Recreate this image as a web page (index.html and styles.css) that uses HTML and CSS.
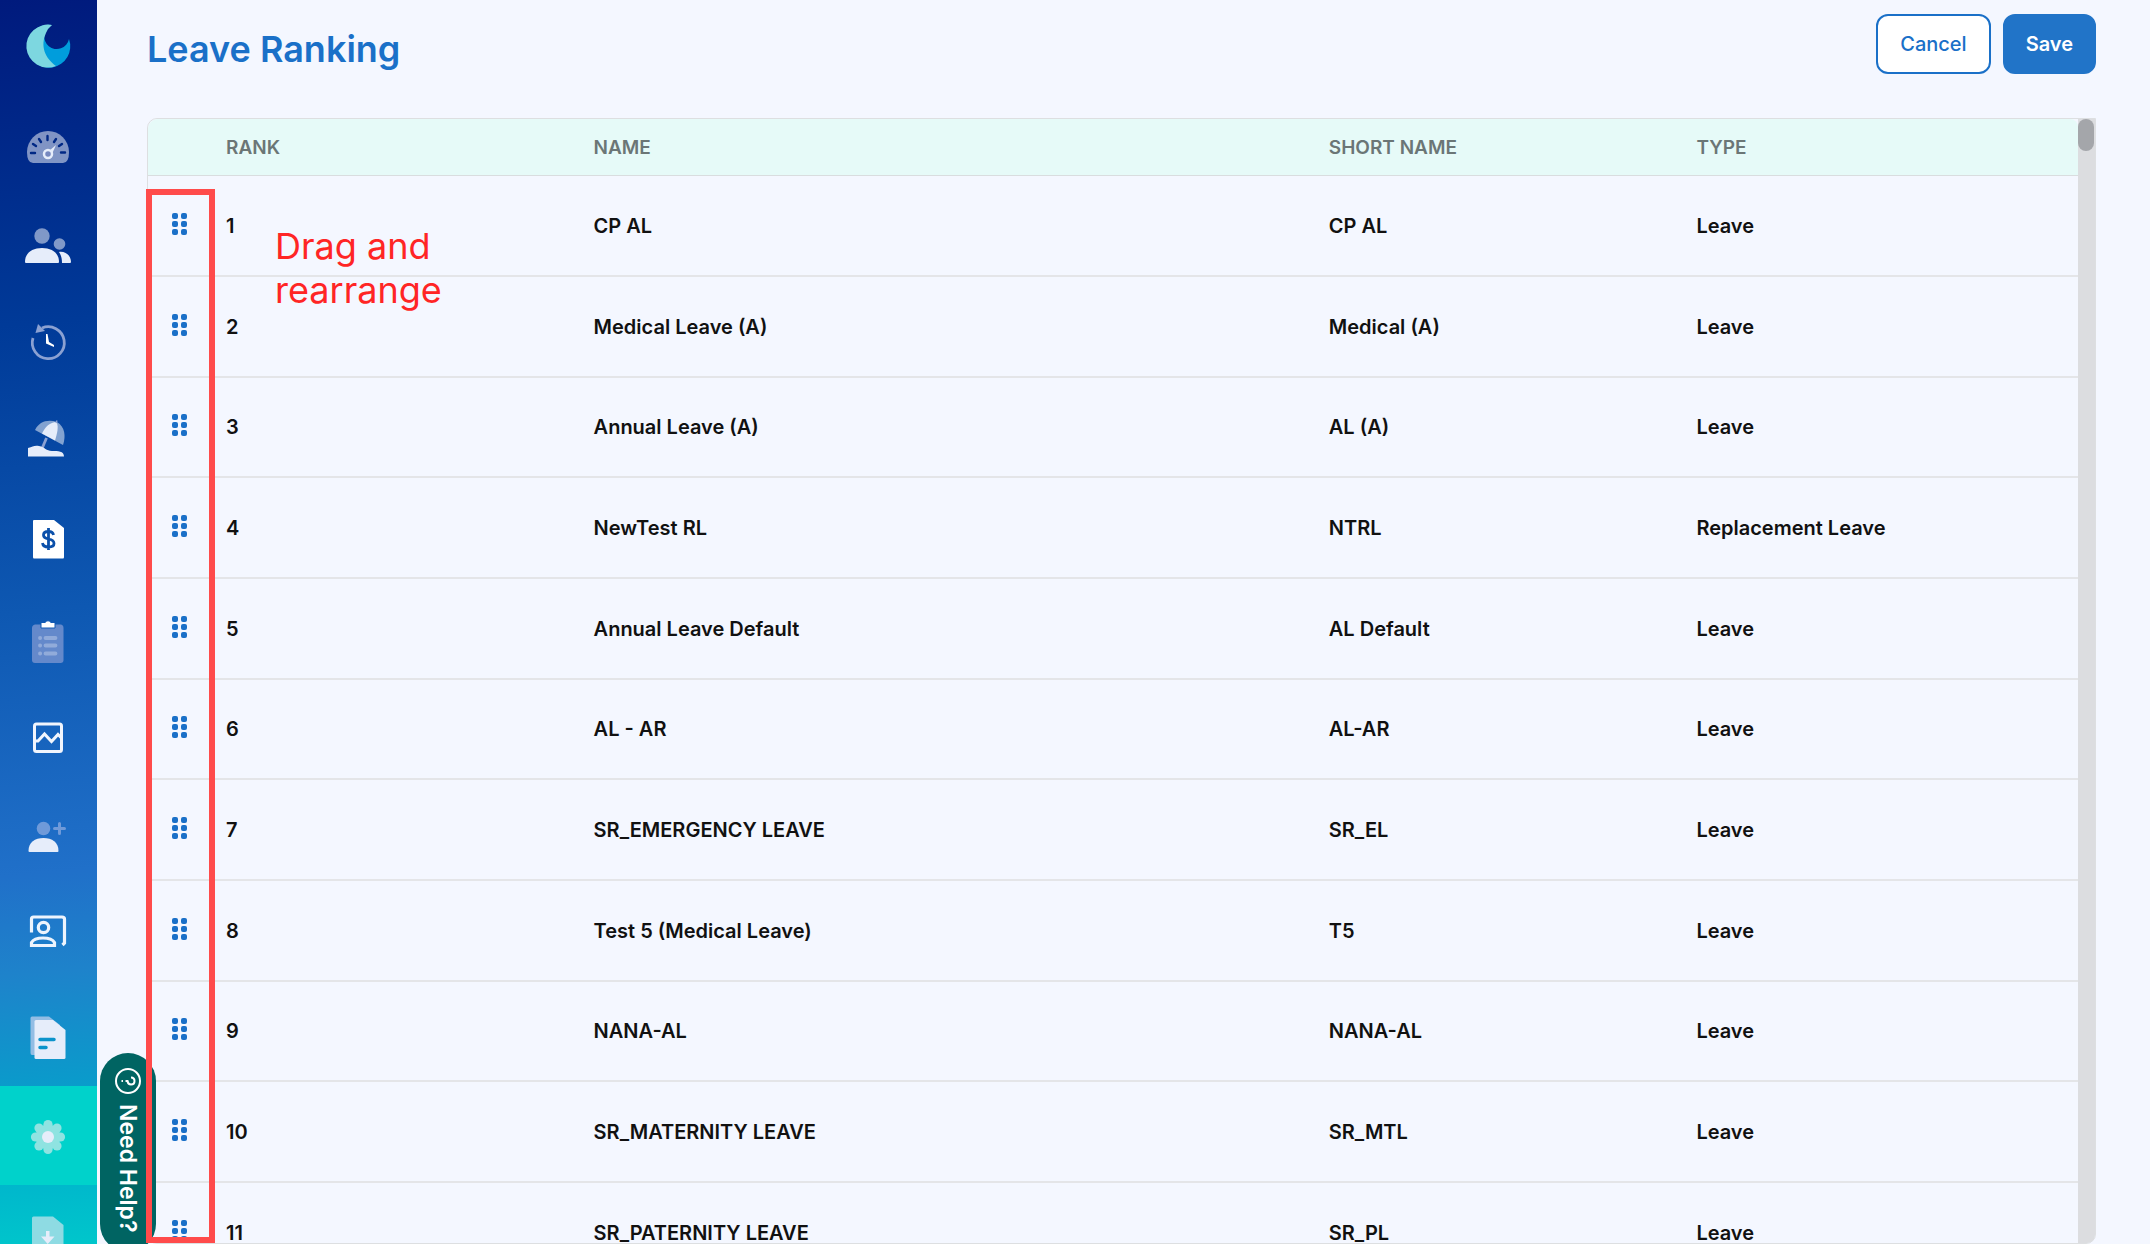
FILE: index.html
```html
<!DOCTYPE html>
<html lang="en">
<head>
  <meta charset="UTF-8">
  <meta name="viewport" content="width=device-width, initial-scale=1.0">
  <title>Leave Ranking</title>
  <link rel="stylesheet" href="styles.css">
</head>
<body>
  <nav class="sidebar" aria-label="Main">
    <a class="nav-item logo" href="#" aria-label="Home">
      <svg viewBox="0 0 97 96">
        <path d="M52 25A21.500 21.500 0 1 0 69 39A12.500 12.500 0 1 1 52 25Z" fill="#009ddc"/>
        <path d="M52 25A21.500 21.500 0 1 0 56 66C45 58 40 46 46 33Q48 28 52 25Z" fill="#7dd7e0"/>
      </svg>
    </a>
    <a class="nav-item" href="#" aria-label="Dashboard">
      <svg viewBox="0 0 97 99">
        <path d="M33 67Q27 67 27 56A21 21 0 0 1 69 56Q69 67 63 67Z" class="soft"/>
        <path d="M31 57H35M61 56.500H65M33 48L36 50M39 43L41 46M47.500 40V44M56 43L54 46M62 48L59 50" stroke="#002885" stroke-width="2.400" stroke-linecap="round"/>
        <path d="M49 55L56 49L52 58Z" class="solid"/>
        <circle cx="48" cy="58" r="4" fill="#7688bf" stroke="#e6edfa" stroke-width="2.500"/>
      </svg>
    </a>
    <a class="nav-item" href="#" aria-label="Employees">
      <svg viewBox="0 0 97 99">
        <circle cx="42" cy="41" r="7.700" class="soft"/>
        <circle cx="59.500" cy="49" r="5.800" class="soft"/>
        <path d="M25 67C25 58 32 53 42 53S59 58 59 67Q59 68 58 68H26Q25 68 25 67Z" class="solid"/>
        <path d="M59 57C66 56 71 61 71 67Q71 68 70 68H62C62 63 61 60 59 57Z" class="solid"/>
      </svg>
    </a>
    <a class="nav-item" href="#" aria-label="Attendance">
      <svg viewBox="0 0 97 99">
        <path d="M33 44A16 16 0 1 0 42 34" fill="none" stroke="#8ba1d2" stroke-width="2.800"/>
        <path d="M38 30L45 37L35.500 39Z" fill="#8ba1d2"/>
        <path d="M46 40H47.500L49 48L54 51V53L46 49.500Z" fill="#fff"/>
      </svg>
    </a>
    <a class="nav-item" href="#" aria-label="Leave">
      <svg viewBox="0 0 97 99">
        <path d="M46.500 45L41 58" stroke="#8ba1d2" stroke-width="2.800"/>
        <path d="M35 37C39 29 47 26 57 29C65 34 66 43 63 52Z" class="soft"/>
        <path d="M42 40.500C45 34 50 29 56.500 29C59 34 57 41 55 47.500Z" class="solid"/>
        <path d="M56 30L57 27.500" stroke="#8ba1d2" stroke-width="1.500"/>
        <path d="M28 55C33 54 34 52 39 53C45 54 46 58 52 58C58 58 64 58 64 63.500H28Z" class="solid"/>
      </svg>
    </a>
    <a class="nav-item" href="#" aria-label="Payroll">
      <svg viewBox="0 0 97 99">
        <path d="M34 28H54L64 36V65Q64 66.500 63 66.500H34Q33 66.500 33 65V29Q33 28 34 28Z" fill="#fff"/>
        <path d="M53.500 43Q53 39.500 48.500 39.500Q43.500 39.500 43.500 43Q43.500 46 48.500 47Q54 48 54 51.500Q54 55 48.500 55Q43 55 42.500 51M48.500 36V58" fill="none" stroke="#0b50aa" stroke-width="2.800"/>
      </svg>
    </a>
    <a class="nav-item" href="#" aria-label="Claims">
      <svg viewBox="0 0 97 99">
        <path d="M35 33.500H61Q63.500 34 63.500 37V69Q63.500 72 60.500 72H35Q32 72 32 69V37Q32 34 35 33.500Z" fill="#6489cb"/>
        <path d="M40 47H40.200M45.500 47H55.500M40 54.500H40.200M45.500 54.500H55.500M40 62.500H40.200M45.500 62.500H55.500" stroke="#91abda" stroke-width="3.800" stroke-linecap="round"/>
        <path d="M41 31.500H45Q48 28 51 31.500H55V37H41Z" fill="#fff" stroke="#125ab5" stroke-width="1"/>
      </svg>
    </a>
    <a class="nav-item" href="#" aria-label="Reports">
      <svg viewBox="0 0 97 99" fill="none" stroke="#f1f5fd" stroke-width="3">
        <rect x="34.500" y="34" width="27" height="27.500" rx="2"/>
        <path d="M36 51L38 51L44.500 44L51.500 51.500L58 44.500L61 47.500"/>
      </svg>
    </a>
    <a class="nav-item" href="#" aria-label="Recruitment">
      <svg viewBox="0 0 97 99">
        <circle cx="43.500" cy="39.500" r="6.800" fill="#6f9ad9"/>
        <path d="M59.500 34.500V44.500M54.500 39.500H64.500" stroke="#6f9ad9" stroke-width="3" stroke-linecap="round"/>
        <path d="M28.500 62C28.500 53 35 49 43.500 49S58.500 53 58.500 62Q58.500 63 57.500 63H29.500Q28.500 63 28.500 62Z" class="solid"/>
      </svg>
    </a>
    <a class="nav-item" href="#" aria-label="Training">
      <svg viewBox="0 0 97 99" fill="none" stroke="#edf4fd" stroke-width="3.200">
        <path d="M31.500 44.500V31Q31.500 29 33.500 29H62Q64.500 29 64.500 31V55L62.500 57"/>
        <circle cx="43.500" cy="39.500" r="5.200"/>
        <path d="M31.500 57.500V54.500C35 48.500 51 48.500 54.500 54.500V57.500Z"/>
      </svg>
    </a>
    <a class="nav-item" href="#" aria-label="Documents">
      <svg viewBox="0 0 97 99">
        <path d="M32 29.500H49L60 38V68H32Q30.500 68 30.500 66V31Q30.500 29.500 32 29.500Z" fill="#93bde4"/>
        <path d="M36 33H53L65.500 43V70.500Q65.500 72 64 72H36Q34.500 72 34.500 70.500V34.500Q34.500 33 36 33Z" class="solid"/>
        <path d="M40 52.500H54M40 60.500H46" stroke="#0b93cb" stroke-width="3.500" stroke-linecap="round"/>
      </svg>
    </a>
    <a class="nav-item active" href="#" aria-label="Settings">
      <svg viewBox="0 0 97 99">
        <g fill="#8fe3e1">
          <circle cx="48" cy="51" r="12.500"/>
          <circle cx="48" cy="38.500" r="4.600"/>
          <circle cx="57" cy="42" r="4.600"/>
          <circle cx="60.500" cy="51" r="4.600"/>
          <circle cx="57" cy="60" r="4.600"/>
          <circle cx="48" cy="63.500" r="4.600"/>
          <circle cx="39" cy="60" r="4.600"/>
          <circle cx="35.500" cy="51" r="4.600"/>
          <circle cx="39" cy="42" r="4.600"/>
        </g>
        <circle cx="48" cy="51" r="6" class="solid"/>
      </svg>
    </a>
    <a class="nav-item" href="#" aria-label="Downloads">
      <svg viewBox="0 0 97 99">
        <path d="M33.500 31.500H53L63.500 40V69H32V33Q32 31.500 33.500 31.500Z" fill="#8edbe3"/>
        <path d="M46 46H49.500V51.500H54.500L47.700 59L41 51.500H46Z" class="solid"/>
      </svg>
    </a>
  </nav>

  <main class="page">
    <header class="page-header">
      <h1>Leave Ranking</h1>
      <div class="actions">
        <button class="btn" type="button">Cancel</button>
        <button class="btn btn-primary" type="button">Save</button>
      </div>
    </header>

    <div class="table-box">
      <table class="ranking">
        <thead>
          <tr><th></th><th>RANK</th><th>NAME</th><th>SHORT NAME</th><th>TYPE</th></tr>
        </thead>
        <tbody id="rows"></tbody>
      </table>
      <div class="track"><div class="thumb"></div></div>
      <div class="highlight"></div>
      <p class="note">Drag and rearrange</p>
    </div>
  </main>

  <button class="help" type="button">
    <svg viewBox="0 0 26 26" fill="none" stroke="#fff" stroke-width="2">
      <circle cx="13" cy="13" r="12"/>
      <path d="M16 9.500Q19.500 9.500 19.500 13T16 16.500Q13 16.500 12.500 13H10.500M8 13H6.500"/>
    </svg>
    <span>Need Help?</span>
  </button>

  <script>
    const leaves = [
      ["CP AL", "CP AL", "Leave"],
      ["Medical Leave (A)", "Medical (A)", "Leave"],
      ["Annual Leave (A)", "AL (A)", "Leave"],
      ["NewTest RL", "NTRL", "Replacement Leave"],
      ["Annual Leave Default", "AL Default", "Leave"],
      ["AL - AR", "AL-AR", "Leave"],
      ["SR_EMERGENCY LEAVE", "SR_EL", "Leave"],
      ["Test 5 (Medical Leave)", "T5", "Leave"],
      ["NANA-AL", "NANA-AL", "Leave"],
      ["SR_MATERNITY LEAVE", "SR_MTL", "Leave"],
      ["SR_PATERNITY LEAVE", "SR_PL", "Leave"]
    ];
    const rows = document.getElementById("rows");

    leaves.forEach(function (leave, index) {
      const row = document.createElement("tr");
      const handle = document.createElement("td");
      handle.innerHTML = '<button class="handle" type="button" aria-label="Move">' +
        "<i></i><i></i><i></i><i></i><i></i><i></i></button>";
      row.appendChild(handle);
      [index + 1].concat(leave).forEach(function (text) {
        const cell = document.createElement("td");
        cell.textContent = text;
        row.appendChild(cell);
      });
      rows.appendChild(row);
    });
  </script>
</body>
</html>
```

FILE: styles.css
```css
* {
  box-sizing: border-box;
}

body {
  margin: 0;
  height: 100vh;
  display: flex;
  overflow: hidden;
  background: #f4f7ff;
  color: #111;
  font-family: Inter, "Liberation Sans", sans-serif;
  font-size: 20px;
  font-weight: 500;
}

button {
  font: inherit;
  cursor: pointer;
}

/* sidebar */
.sidebar {
  width: 97px;
  flex-shrink: 0;
  overflow: hidden;
  background: linear-gradient(175deg, #001a7d 0%, #003a98 26%, #0e58b2 49%, #2070c9 70%, #1e83cb 78%, #0a9bcb 87%, #00b8cc 95%, #00c6cb 100%);
}

.nav-item {
  display: block;
  height: 99px;
}

.nav-item svg {
  display: block;
  width: 97px;
  height: 100%;
}

.logo {
  height: 96px;
}

.active {
  background: #00d2cb;
}

.soft {
  fill: #fff;
  fill-opacity: 0.5;
}

.solid {
  fill: #e6edfa;
}

/* page */
.page {
  flex: 1;
  min-width: 0;
  display: flex;
  flex-direction: column;
  padding: 14px 54px 0 50px;
}

.page-header {
  display: flex;
  justify-content: space-between;
  align-items: flex-start;
  height: 104px;
}

h1 {
  margin: 0;
  padding-top: 11px;
  color: #1a70c8;
  font-size: 36px;
  line-height: 48px;
  font-weight: 600;
}

.actions {
  display: flex;
  gap: 12px;
}

.btn {
  height: 60px;
  padding: 0 22px;
  border: 2px solid #1a70c8;
  border-radius: 12px;
  background: #fff;
  color: #1a70c8;
}

.btn-primary {
  padding: 0 21px;
  background: #2174c8;
  border-color: #2174c8;
  color: #fff;
  font-weight: 600;
}

/* table */
.table-box {
  position: relative;
  flex: 1;
  min-height: 0;
  display: flex;
  border: 1px solid #dddfe1;
  border-radius: 10px 0 10px 10px;
}

.ranking {
  flex: 1;
  display: block;
  overflow: hidden;
  border-radius: 10px 8px 0 10px;
}

.ranking thead,
.ranking tbody {
  display: block;
}

.ranking tr {
  display: grid;
  grid-template-columns: 78px 1fr 2fr 1fr 1fr;
  align-items: center;
  height: 101px;
  padding-right: 14px;
  border-bottom: 2px solid #e4e5e8;
}

.ranking tbody tr:nth-child(3n) {
  height: 100px;
}

.ranking thead tr {
  height: 57px;
  border-bottom: 1px solid #d9dddf;
  background: #e6faf8;
}

.ranking th,
.ranking td {
  padding: 0;
  text-align: left;
  font-weight: 600;
}

.ranking th {
  color: #6b7676;
  font-size: 19px;
}

.handle {
  display: grid;
  grid-template-columns: 6px 6px;
  gap: 2px 3px;
  margin-left: 24px;
  padding: 0 0 4px;
  border: 0;
  background: none;
}

.handle i {
  height: 6px;
  border-radius: 2px;
  background: #1a70c8;
}

.track {
  width: 17px;
  border-radius: 0 0 8px 0;
  background: #dcdde0;
}

.thumb {
  width: 16px;
  height: 32px;
  border-radius: 8px;
  background: #a4a6aa;
}

/* annotation over the table */
.highlight {
  position: absolute;
  z-index: 2;
  top: 70px;
  bottom: 0;
  left: -2px;
  width: 69px;
  border: 6px solid #ff4b4b;
}

.note {
  position: absolute;
  top: 105px;
  left: 127px;
  width: 190px;
  margin: 0;
  color: #ff2525;
  font-size: 36px;
  line-height: 44px;
  font-weight: 400;
}

/* help tab */
.help {
  position: absolute;
  z-index: 1;
  left: 100px;
  bottom: -8px;
  width: 56px;
  display: flex;
  flex-direction: column;
  align-items: center;
  gap: 10px;
  padding: 15px 0 20px;
  border: 0;
  border-radius: 28px;
  background: #006462;
  color: #fff;
  font-size: 23px;
  font-weight: 600;
}

.help svg {
  width: 26px;
  height: 26px;
}

.help span {
  writing-mode: vertical-rl;
}
```
